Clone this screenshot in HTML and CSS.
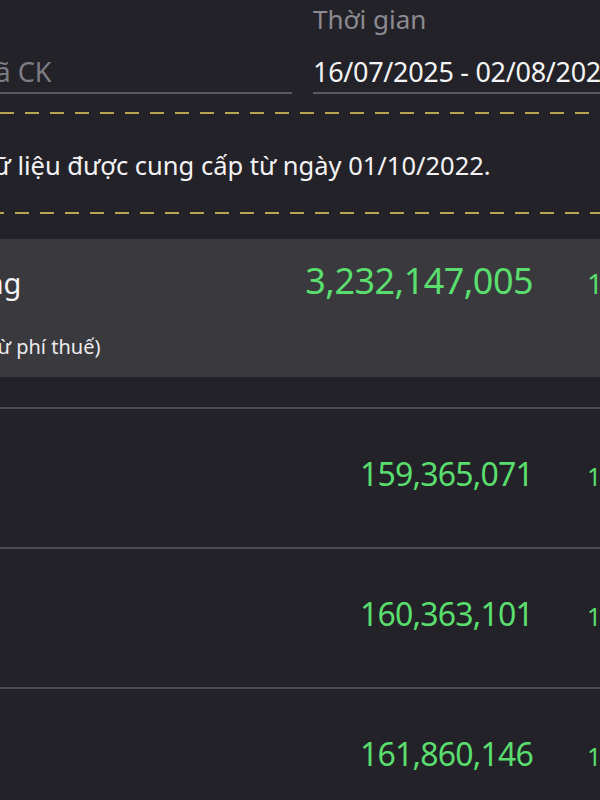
FILE: index.html
```html
<!DOCTYPE html>
<html lang="vi">
<head>
<meta charset="utf-8">
<title>Lãi lỗ đã thực hiện</title>
<link rel="stylesheet" href="styles.css">
</head>
<body>
<div class="page">
  <div class="filters">
    <div class="field">
      <div class="field-input placeholder"><span class="shift-code">Mã CK</span></div>
    </div>
    <div class="field">
      <div class="field-label">Thời gian</div>
      <div class="field-input value">16/07/2025 - 02/08/2025</div>
    </div>
  </div>

  <div class="dash"></div>
  <p class="note"><span class="shift-note">Dữ liệu được cung cấp từ ngày 01/10/2022.</span></p>
  <div class="dash dash-b"></div>

  <div class="summary">
    <div class="summary-head">
      <div class="title"><span class="shift-title">Tổng</span></div>
      <div class="amount big">3,232,147,005</div>
      <div class="extra big-extra">100%</div>
    </div>
    <div class="sub"><span class="shift-sub">(Đã trừ phí thuế)</span></div>
  </div>

  <div class="rows">
    <div class="row">
      <div class="title"></div>
      <div class="amount">159,365,071</div>
      <div class="extra">100%</div>
    </div>
    <div class="row">
      <div class="title"></div>
      <div class="amount">160,363,101</div>
      <div class="extra">100%</div>
    </div>
    <div class="row">
      <div class="title"></div>
      <div class="amount">161,860,146</div>
      <div class="extra">100%</div>
    </div>
  </div>
</div>
</body>
</html>
```

FILE: styles.css
```css
html, body {
  margin: 0;
  padding: 0;
  overflow: hidden;
  background: #232228;
}

body {
  width: 600px;
  height: 800px;
  font-family: "Noto Sans", "Open Sans", sans-serif;
  color: #f2f2f4;
}

.page {
  width: 600px;
}

/* filters */
.filters {
  display: grid;
  grid-template-columns: 292px 1fr;
  column-gap: 21px;
  align-items: end;
  padding-top: 1px;
}

.field {
  min-width: 0;
}

.field-label {
  font-size: 26px;
  line-height: 36px;
  color: #8b8a90;
  white-space: nowrap;
}

.field-input {
  margin-top: 17px;
  line-height: 36px;
  padding-bottom: 2px;
  border-bottom: 2px solid #5a595f;
  white-space: nowrap;
  overflow: visible;
}

.placeholder {
  font-size: 27px;
  color: #7d7c82;
}

.value {
  font-size: 27px;
  letter-spacing: -0.3px;
  color: #f4f4f6;
}

.shift-code {
  display: inline-block;
  margin-left: -29px;
}

/* dashed separators */
.dash {
  height: 2px;
  margin-top: 18px;
  background: repeating-linear-gradient(90deg, #b8a452 0 14px, transparent 14px 25px);
}

.dash-b {
  margin-top: 0;
  background-position: 15px 0;
}

.note {
  margin: 0;
  padding: 35px 0 31px;
  font-size: 25.5px;
  line-height: 32px;
  color: #f3f3f5;
  white-space: nowrap;
}

.shift-note {
  display: inline-block;
  margin-left: -25px;
}

/* summary card */
.summary {
  margin-top: 25px;
  height: 138px;
  box-sizing: border-box;
  padding-top: 20px;
  background: #3a393e;
}

.summary-head,
.row {
  display: grid;
  grid-template-columns: 1fr auto 13px;
  column-gap: 54px;
  align-items: baseline;
}

.title {
  font-size: 29px;
  line-height: 36px;
  color: #f4f4f6;
  white-space: nowrap;
}

.shift-title {
  display: inline-block;
  margin-left: -46px;
}

.amount {
  font-size: 32px;
  line-height: 40px;
  letter-spacing: -0.8px;
  color: #5ade6e;
  text-align: right;
  white-space: nowrap;
}

.amount.big {
  font-size: 36px;
  line-height: 44px;
  letter-spacing: -0.55px;
}

.extra {
  font-size: 25px;
  color: #5ade6e;
  white-space: nowrap;
}

.big-extra {
  font-size: 28px;
}

.sub {
  margin-top: 31px;
  font-size: 20px;
  line-height: 26px;
  color: #ececee;
  white-space: nowrap;
}

.shift-sub {
  display: inline-block;
  margin-left: -55px;
}

/* rows */
.rows {
  margin-top: 30px;
}

.row {
  height: 140px;
  box-sizing: border-box;
  border-top: 2px solid #4c4b51;
  padding-top: 45px;
  align-content: start;
}
```
